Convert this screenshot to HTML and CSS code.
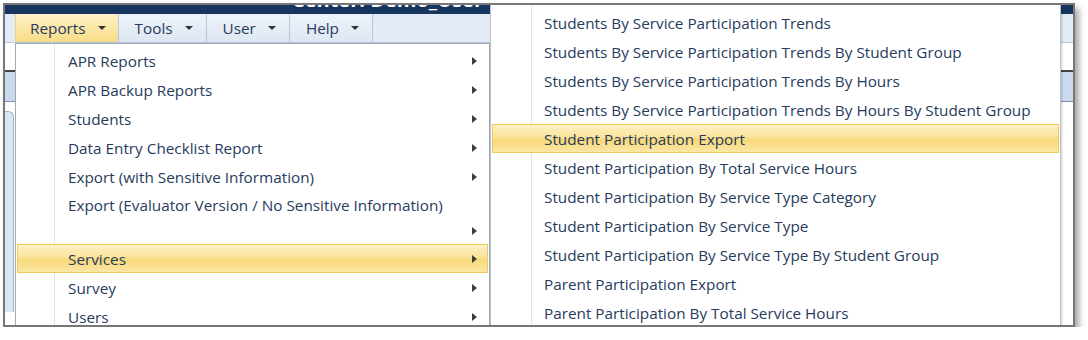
FILE: index.html
```html
<!DOCTYPE html>
<html lang="en">
<head>
  <meta charset="UTF-8">
  <meta name="viewport" content="width=device-width, initial-scale=1.0">
  <title>Reports Menu</title>
  <link rel="stylesheet" href="styles.css">
</head>
<body>
  <div class="shot">
    <div class="titlebar"><span class="title">Center: Demo_User</span></div>
    <div class="menubar">
      <div class="menu-item active">Reports <span class="caret"></span></div>
      <div class="menu-item">Tools <span class="caret"></span></div>
      <div class="menu-item">User <span class="caret"></span></div>
      <div class="menu-item">Help <span class="caret"></span></div>
    </div>
    <div class="page">
      <div class="page-band"></div>
      <div class="page-body">
        <div class="side-panel"></div>
      </div>
    </div>

    <ul class="dropdown main-menu">
      <li class="item"><span class="label">APR Reports</span><span class="arrow"></span></li>
      <li class="item"><span class="label">APR Backup Reports</span><span class="arrow"></span></li>
      <li class="item"><span class="label">Students</span><span class="arrow"></span></li>
      <li class="item"><span class="label">Data Entry Checklist Report</span><span class="arrow"></span></li>
      <li class="item"><span class="label">Export (with Sensitive Information)</span><span class="arrow"></span></li>
      <li class="item wrap"><span class="label">Export (Evaluator Version / No Sensitive Information)</span><span class="arrow"></span></li>
      <li class="item selected"><span class="label">Services</span><span class="arrow"></span></li>
      <li class="item"><span class="label">Survey</span><span class="arrow"></span></li>
      <li class="item"><span class="label">Users</span><span class="arrow"></span></li>
    </ul>

    <ul class="dropdown sub-menu">
      <li class="item"><span class="label">Students By Service Participation Trends</span></li>
      <li class="item"><span class="label">Students By Service Participation Trends By Student Group</span></li>
      <li class="item"><span class="label">Students By Service Participation Trends By Hours</span></li>
      <li class="item"><span class="label">Students By Service Participation Trends By Hours By Student Group</span></li>
      <li class="item selected"><span class="label">Student Participation Export</span></li>
      <li class="item"><span class="label">Student Participation By Total Service Hours</span></li>
      <li class="item"><span class="label">Student Participation By Service Type Category</span></li>
      <li class="item"><span class="label">Student Participation By Service Type</span></li>
      <li class="item"><span class="label">Student Participation By Service Type By Student Group</span></li>
      <li class="item"><span class="label">Parent Participation Export</span></li>
      <li class="item"><span class="label">Parent Participation By Total Service Hours</span></li>
    </ul>
  </div>
</body>
</html>
```

FILE: styles.css
```css
body {
  margin: 0;
  background-color: #fff;
  font-family: "Open Sans", "Noto Sans", sans-serif;
  color: #273b5c;
}

.shot {
  position: relative;
  width: 1068px;
  height: 320px;
  margin: 3px 0 0 3px;
  border: 2px solid #777;
  box-shadow: 4px 5px 6px rgba(0, 0, 0, 0.35);
  overflow: hidden;
  background-color: #fff;
}

/* page behind the menus */
.titlebar {
  height: 9px;
  background-color: #17365f;
  overflow: hidden;
  display: flex;
  align-items: flex-start;
  justify-content: flex-end;
  padding-right: 590px;
}

.title {
  margin-top: -15px;
  font-size: 20px;
  line-height: 20px;
  font-weight: bold;
  color: #fff;
  white-space: nowrap;
}

.menubar {
  display: flex;
  height: 28px;
  padding-left: 10px;
  background-color: #e2ebf6;
  border-bottom: 1px solid #b8c7da;
}

.menu-item {
  display: flex;
  align-items: center;
  padding: 0 13px 0 16px;
  font-size: 15.3px;
  border-right: 1px solid #b7c7db;
  background: linear-gradient(#eef3fa, #dde7f3);
}

.menu-item.active {
  padding-left: 14px;
  padding-right: 12px;
  background: linear-gradient(#fdf1c6, #f8dc88);
  border-left: 1px solid #ecd08a;
}

.caret {
  width: 0;
  height: 0;
  margin-left: 12px;
  border-top: 4px solid #333;
  border-left: 4px solid transparent;
  border-right: 4px solid transparent;
}

.page-band {
  margin-top: 27px;
  height: 29px;
  background-color: #cbd9ec;
  border-top: 2px solid #434343;
  border-bottom: 1px solid #7f90a8;
}

.page-body {
  height: 200px;
  padding-top: 9px;
}

.side-panel {
  width: 8px;
  height: 100%;
  background-color: #dbe6f4;
  border-right: 1px solid #9cb0ca;
  border-top: 1px solid #9cb0ca;
  border-top-right-radius: 6px;
}

/* dropdown menus */
.dropdown {
  position: absolute;
  margin: 0;
  list-style: none;
  background: linear-gradient(to right, transparent 38px, #e4e4e4 38px, #e4e4e4 39px, transparent 39px), #fff;
  border: 1px solid #a2abb8;
  box-shadow: 1px 1px 2px rgba(0, 0, 0, 0.2);
  font-size: 15.3px;
}

.main-menu {
  left: 10px;
  top: 38px;
  width: 471px;
  padding: 2px 1px;
}

.sub-menu {
  left: 485px;
  top: -2px;
  width: 567px;
  padding: 4px 1px 0;
  border-color: #b9c1cc;
  background: linear-gradient(to right, transparent 40px, #e4e4e4 40px, #e4e4e4 41px, transparent 41px), #fff;
}

.item {
  display: flex;
  align-items: center;
  box-sizing: border-box;
  height: 29px;
  padding: 0 10px 0 50px;
  border: 1px solid transparent;
  white-space: nowrap;
}

.sub-menu .item {
  padding-left: 51px;
}

.item.wrap {
  flex-wrap: wrap;
  height: 53px;
  align-content: flex-start;
}

.item.wrap .label {
  flex-basis: 100%;
  line-height: 27px;
}

.item.wrap .arrow {
  margin-top: 8px;
}

.item.selected {
  border-color: #f0c95e;
  background: linear-gradient(#fdf1c4, #fae39a 45%, #f8d978 55%, #fbe7a6);
}

.arrow {
  width: 0;
  height: 0;
  margin-left: auto;
  border-left: 5px solid #3e3e3e;
  border-top: 4px solid transparent;
  border-bottom: 4px solid transparent;
}
```
